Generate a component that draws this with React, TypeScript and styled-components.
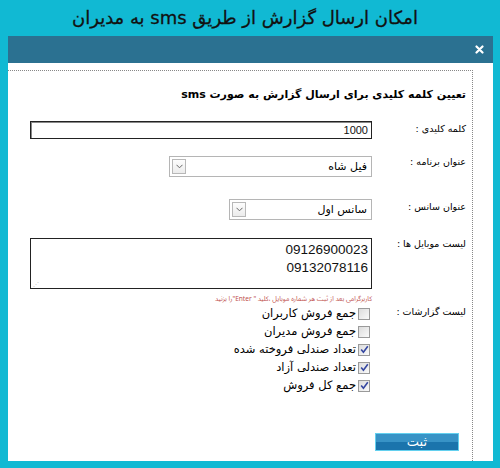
import * as React from 'react';
import styled, { createGlobalStyle } from 'styled-components';

const CYAN = '#11b9d3';
const HEADER_BLUE = '#2b7191';
const FONT = '"DejaVu Sans", "Noto Sans", sans-serif';

const GlobalStyle = createGlobalStyle`
  html, body { margin: 0; padding: 0; }
  body {
    background: ${CYAN};
    font-family: ${FONT};
    width: 500px;
    height: 468px;
    overflow: hidden;
  }
`;

const Page = styled.div`
  height: 468px;
  display: flex;
  flex-direction: column;
`;

const Title = styled.h1`
  margin: 0;
  height: 36px;
  line-height: 36px;
  text-align: center;
  direction: rtl;
  font-size: 18px;
  font-weight: normal;
  color: #111;
  padding-right: 10px;
  -webkit-text-stroke: 0.3px #111;
`;

const Dialog = styled.div`
  margin: 0 7px 0 8px;
  height: 425px;
  background: #fff;
  display: flex;
  flex-direction: column;
`;

const DialogHeader = styled.div`
  height: 27px;
  background: ${HEADER_BLUE};
  display: flex;
  align-items: center;
  justify-content: flex-end;
  padding-right: 9px;
`;

const Body = styled.div`
  flex: 1;
  padding-top: 7px;
  display: flex;
  overflow: hidden;
`;

const Frame = styled.div`
  flex: 1;
  margin-right: 20px;
  border-top: 1px dotted #888;
  border-right: 1px dotted #888;
  direction: rtl;
  padding: 14px 6px 0 0;
  display: flex;
  flex-direction: column;
`;

const Heading = styled.h2`
  margin: 0 0 16px;
  font-size: 11px;
  font-weight: bold;
  color: #000;
  line-height: 20px;
`;

const Row = styled.div<{ $gap: number }>`
  display: grid;
  grid-template-columns: 94px 1fr;
  align-items: start;
  margin-bottom: ${(p) => p.$gap}px;
`;

const Label = styled.label<{ $top?: number }>`
  font-size: 9.5px;
  color: #000;
  padding-top: ${(p) => p.$top ?? 0}px;
  white-space: nowrap;
`;

const TextBox = styled.div`
  width: 342px;
  height: 18px;
  box-sizing: border-box;
  border: 1px solid #222;
  box-shadow: inset 1px 1px 0 #888;
  font-size: 11px;
  line-height: 16px;
  padding: 0 3px;
  direction: ltr;
  text-align: right;
  font-family: "Liberation Sans", Arial, sans-serif;
  color: #111;
`;

const Select = styled.div<{ $w: number }>`
  width: ${(p) => p.$w}px;
  height: 21px;
  box-sizing: border-box;
  border: 1px solid #b5b5b5;
  background: #fff;
  display: flex;
  align-items: center;
  justify-content: space-between;
  padding: 0 4px 0 2px;
  font-size: 11px;
  color: #000;
`;

const Arrow = styled.span`
  width: 14px;
  height: 15px;
  box-sizing: border-box;
  border: 1px solid #b8b8b8;
  background: linear-gradient(#fdfdfd, #ececec);
  display: flex;
  align-items: center;
  justify-content: center;
  order: 2;
`;

const SelectText = styled.span`
  order: 1;
`;

const TextArea = styled.div`
  width: 342px;
  height: 51px;
  box-sizing: border-box;
  border: 1px solid #222;
  padding: 2px 3px;
  direction: ltr;
  text-align: right;
  font-family: "Liberation Sans", Arial, sans-serif;
  font-size: 13.5px;
  line-height: 18px;
  color: #111;
  position: relative;
`;

const Grip = styled.span`
  position: absolute;
  left: 2px;
  bottom: 1px;
  font-size: 6px;
  color: #bbb;
  line-height: 6px;
`;

const Hint = styled.div`
  margin: 5px 94px 2px 0;
  font-family: "Noto Sans Arabic", ${FONT};
  font-size: 6.6px;
  line-height: 10px;
  color: #c0504d;
  white-space: nowrap;
`;

const Checks = styled.div`
  display: flex;
  flex-direction: column;
  gap: 3px;
  padding-right: 2px;
`;

const CheckRow = styled.div`
  display: flex;
  align-items: center;
  gap: 2px;
  font-size: 11.5px;
  color: #000;
  line-height: 15px;
`;

const Box = styled.span<{ $on: boolean }>`
  width: 12px;
  height: 12px;
  box-sizing: border-box;
  border: 1px solid #9a9a9a;
  background: linear-gradient(135deg, #dcdcdc, #fafafa);
  display: flex;
  align-items: center;
  justify-content: center;
  flex-shrink: 0;
`;

const Footer = styled.div`
  margin-top: auto;
  margin-bottom: 10px;
  padding-right: 7px;
  display: flex;
  justify-content: flex-start;
`;

const SubmitButton = styled.button`
  width: 84px;
  height: 18px;
  border: 1px solid #63d0ef;
  background: linear-gradient(#3893c6 0%, #3893c6 50%, #1b74ac 50%, #1b74ac 100%);
  color: #fff;
  font-family: ${FONT};
  font-size: 13px;
  padding: 0;
  line-height: 14px;
`;

const CloseIcon = () => (
  <svg width="9" height="9" viewBox="0 0 9 9">
    <path d="M1.5 1.5 L7.5 7.5 M7.5 1.5 L1.5 7.5" stroke="#fff" strokeWidth="2.2" strokeLinecap="round" />
  </svg>
);

const Chevron = () => (
  <svg width="7" height="5" viewBox="0 0 7 5">
    <path d="M0.5 0.8 L3.5 3.8 L6.5 0.8" stroke="#666" strokeWidth="1" fill="none" />
  </svg>
);

const Tick = () => (
  <svg width="9" height="9" viewBox="0 0 9 9">
    <path d="M1.2 4.6 L3.4 7.2 L7.8 1.2" stroke="#3446a0" strokeWidth="1.6" fill="none" />
  </svg>
);

const reports = [
  { label: 'جمع فروش کاربران', on: false },
  { label: 'جمع فروش مدیران', on: false },
  { label: 'تعداد صندلی فروخته شده', on: true },
  { label: 'تعداد صندلی آزاد', on: true },
  { label: 'جمع کل فروش', on: true },
];

const App: React.FC = () => {
  return (
    <Page>
      <GlobalStyle />
      <Title>امکان ارسال گزارش از طریق sms به مدیران</Title>
      <Dialog>
        <DialogHeader>
          <CloseIcon />
        </DialogHeader>
        <Body>
          <Frame>
            <Heading>تعیین کلمه کلیدی برای ارسال گزارش به صورت sms</Heading>
            <Row $gap={17}>
              <Label $top={2}>کلمه کلیدی :</Label>
              <TextBox>1000</TextBox>
            </Row>
            <Row $gap={22}>
              <Label $top={0}>عنوان برنامه :</Label>
              <Select $w={203}>
                <SelectText>فیل شاه</SelectText>
                <Arrow><Chevron /></Arrow>
              </Select>
            </Row>
            <Row $gap={18}>
              <Label $top={2}>عنوان سانس :</Label>
              <Select $w={143}>
                <SelectText>سانس اول</SelectText>
                <Arrow><Chevron /></Arrow>
              </Select>
            </Row>
            <Row $gap={0}>
              <Label $top={0}>لیست موبایل ها :</Label>
              <TextArea>
                09126900023
                <br />
                09132078116
                <Grip>⋰</Grip>
              </TextArea>
            </Row>
            <Hint>کاربرگرامی بعد از ثبت هر شماره موبایل ،کلید " Enter"را بزنید</Hint>
            <Row $gap={0}>
              <Label $top={0}>لیست گزارشات :</Label>
              <Checks>
                {reports.map((r) => (
                  <CheckRow key={r.label}>
                    <Box $on={r.on}>{r.on ? <Tick /> : null}</Box>
                    <span>{r.label}</span>
                  </CheckRow>
                ))}
              </Checks>
            </Row>
            <Footer>
              <SubmitButton>ثبت</SubmitButton>
            </Footer>
          </Frame>
        </Body>
      </Dialog>
    </Page>
  );
};

export default App;
